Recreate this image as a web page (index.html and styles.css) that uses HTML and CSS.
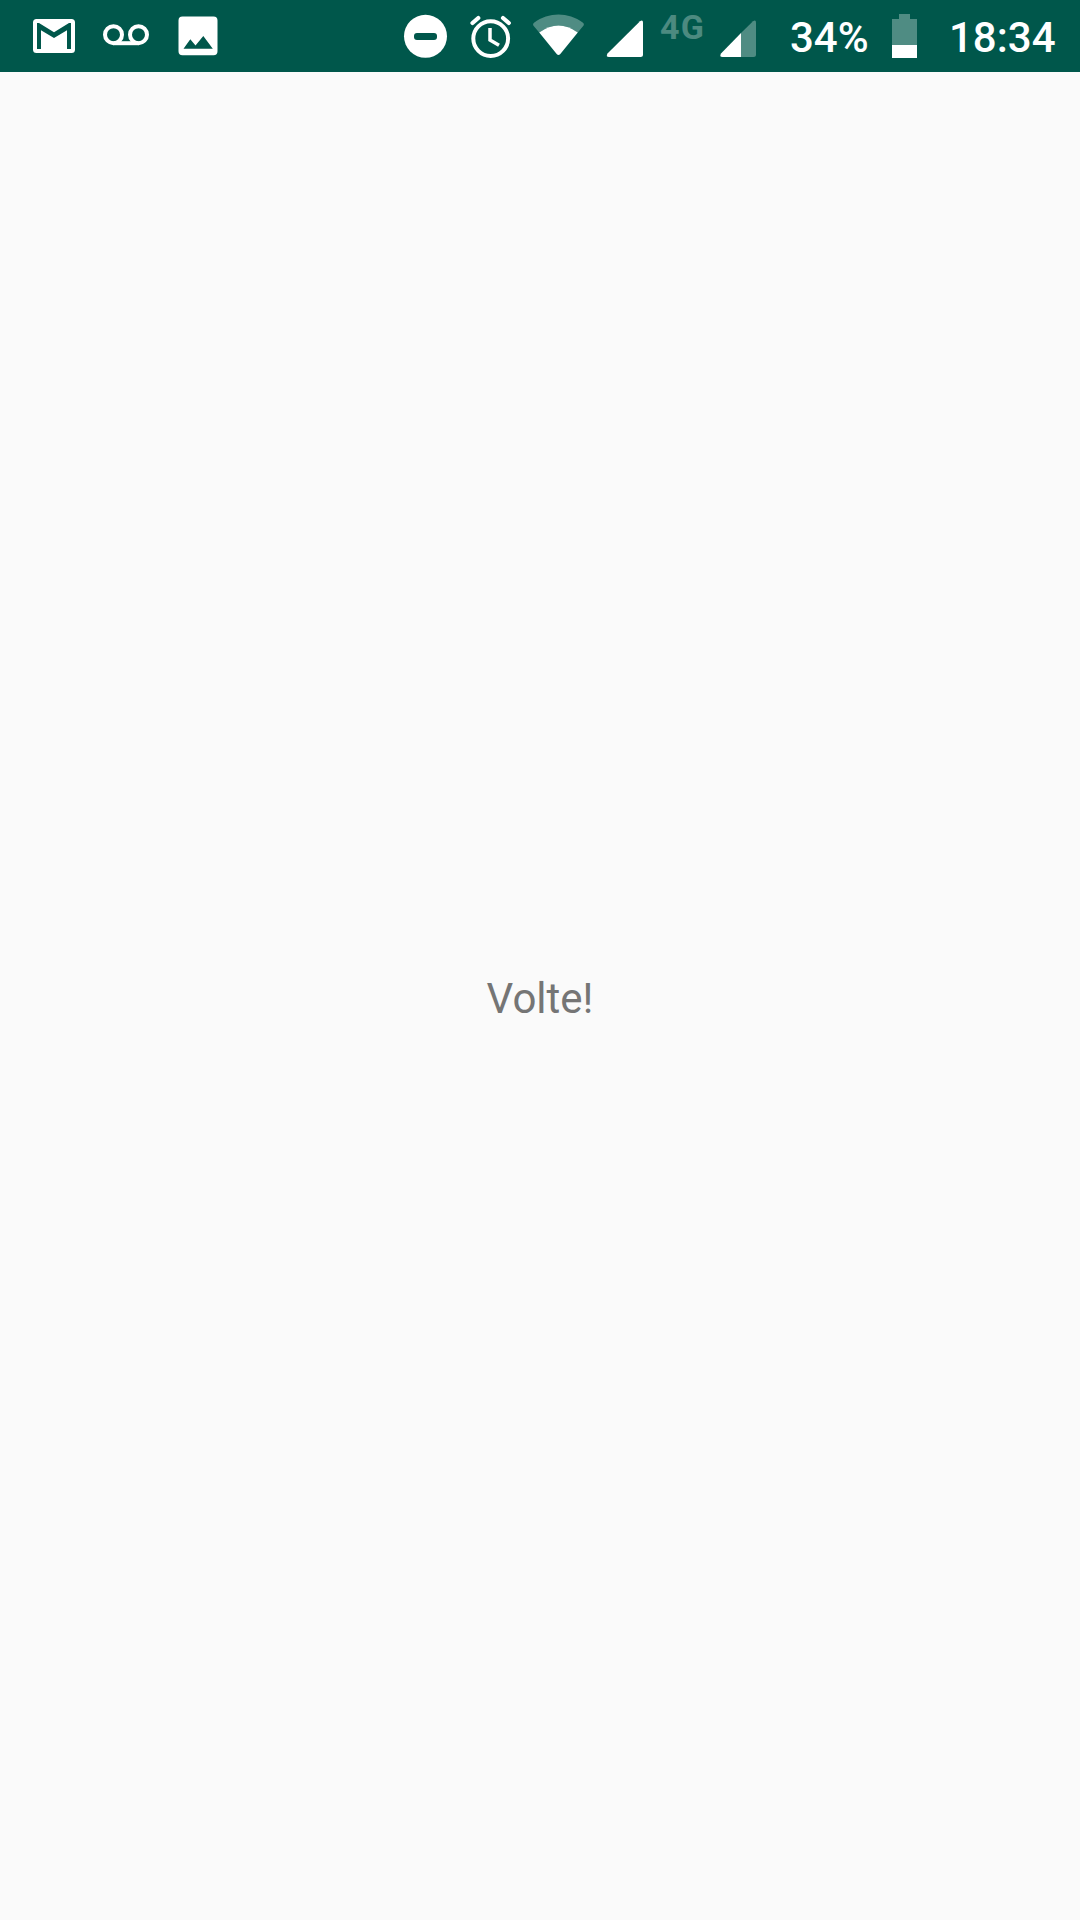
FILE: index.html
```html
<!DOCTYPE html>
<html lang="pt">
<head>
<meta charset="utf-8">
<title>Volte!</title>
<link rel="stylesheet" href="styles.css">
</head>
<body>
<header class="status">
  <div class="group">
    <svg class="icon" width="72" height="72" viewBox="18 0 72 72"><path fill-rule="evenodd" d="M36.5 19H71.5Q75 19 75 22.500V49.500Q75 53 71.500 53H36.500Q33 53 33 49.500V22.500Q33 19 36.500 19ZM37 49H41V30.300L54 38L67 30.300V49H71V23H69L54 32.300L39 23H37Z"/></svg>
    <svg class="icon line" width="72" height="72" viewBox="90 0 72 72"><g stroke-width="4"><circle cx="113.500" cy="34.700" r="8.500"/><circle cx="138.500" cy="34.700" r="8.500"/><path d="M113.500 43.200H138.500"/></g></svg>
    <svg class="icon" width="72" height="72" viewBox="162 0 72 72"><path fill-rule="evenodd" d="M182.500 16.500H213.500Q217.500 16.500 217.500 20.500V51.300Q217.500 55.300 213.500 55.300H182.500Q178.500 55.300 178.500 51.300V20.500Q178.500 16.500 182.500 16.500ZM183.500 48.800H212.800L203.300 36L195.500 45.600L190.300 39.200Z"/></svg>
  </div>
  <div class="group">
    <svg class="icon" width="65" height="72" viewBox="393 0 65 72"><circle cx="425.500" cy="36.300" r="21.500"/><rect class="cut" x="414" y="33" width="23" height="7" rx="3"/></svg>
    <svg class="icon line" width="65" height="72" viewBox="458 0 65 72"><circle cx="490.700" cy="38.600" r="17.400" stroke-width="4"/><path stroke-width="3.500" d="M490 28V40L499 45.200"/><path stroke-width="4.200" stroke-linecap="round" d="M472.500 23L478.300 18M503 18L508.800 23"/></svg>
    <svg class="icon" width="71" height="72" viewBox="523 0 71 72"><path class="dim" d="M533.300 25.500Q532.400 23.800 534 22.700C549 11.800 568 11.800 583 22.700Q584.600 23.800 583.600 25.500L577.800 32.400Q558.500 18.500 539.200 32.400Z"/><path d="M539.200 32.400Q558.500 18.500 577.800 32.400L560.300 54Q558.500 56 556.700 54Z"/></svg>
    <svg class="icon" width="62" height="72" viewBox="594 0 62 72"><path d="M640 21.200Q643 19.500 643 22.500V54.500Q643 57 640.500 57H609Q605.500 57 607.500 53.500Z"/></svg>
    <span class="network">4G</span>
    <svg class="icon" width="58" height="72" viewBox="709 0 58 72"><path class="dim" d="M741 33L753 21.200Q756 19.500 756 22.500V54.500Q756 57 753.500 57H741Z"/><path d="M741 33V57H722.500Q719 57 721 53.500Z"/></svg>
    <span class="percent">34%</span>
    <svg class="icon" width="49" height="72" viewBox="880 0 49 72"><path class="dim" d="M892 19H899V14H910V19H917V45H892Z"/><path d="M892 45H917V58H892Z"/></svg>
    <time class="clock">18:34</time>
  </div>
</header>
<main class="screen"><p class="message">Volte!</p></main>
</body>
</html>
```
FILE: styles.css
```css
body {
  margin: 0;
  height: 1920px;
  display: flex;
  flex-direction: column;
  background: #fafafa;
  font-family: Roboto, sans-serif;
  font-size: 42px;
}

.status {
  height: 72px;
  padding-left: 18px;
  display: flex;
  justify-content: space-between;
  background: #00574b;
  color: #fff;
  font-weight: 500;
}

.group {
  display: flex;
}

.icon {
  flex: none;
  fill: #fff;
}

.line {
  fill: none;
  stroke: #fff;
}

.cut {
  fill: #00574b;
}

.dim {
  fill: #4f8c83;
}

.network {
  box-sizing: border-box;
  width: 53px;
  padding-left: 4px;
  color: #4c8a80;
  font-size: 34px;
  font-weight: 700;
  letter-spacing: 1.2px;
  line-height: 55px;
}

.percent {
  box-sizing: border-box;
  width: 113px;
  padding-left: 23px;
  line-height: 76px;
}

.clock {
  box-sizing: border-box;
  width: 151px;
  padding-left: 20px;
  line-height: 76px;
}

.screen {
  flex: 1;
  display: flex;
  align-items: center;
  justify-content: center;
  padding-top: 4px;
}

.message {
  margin: 0;
  color: #757575;
}
```
